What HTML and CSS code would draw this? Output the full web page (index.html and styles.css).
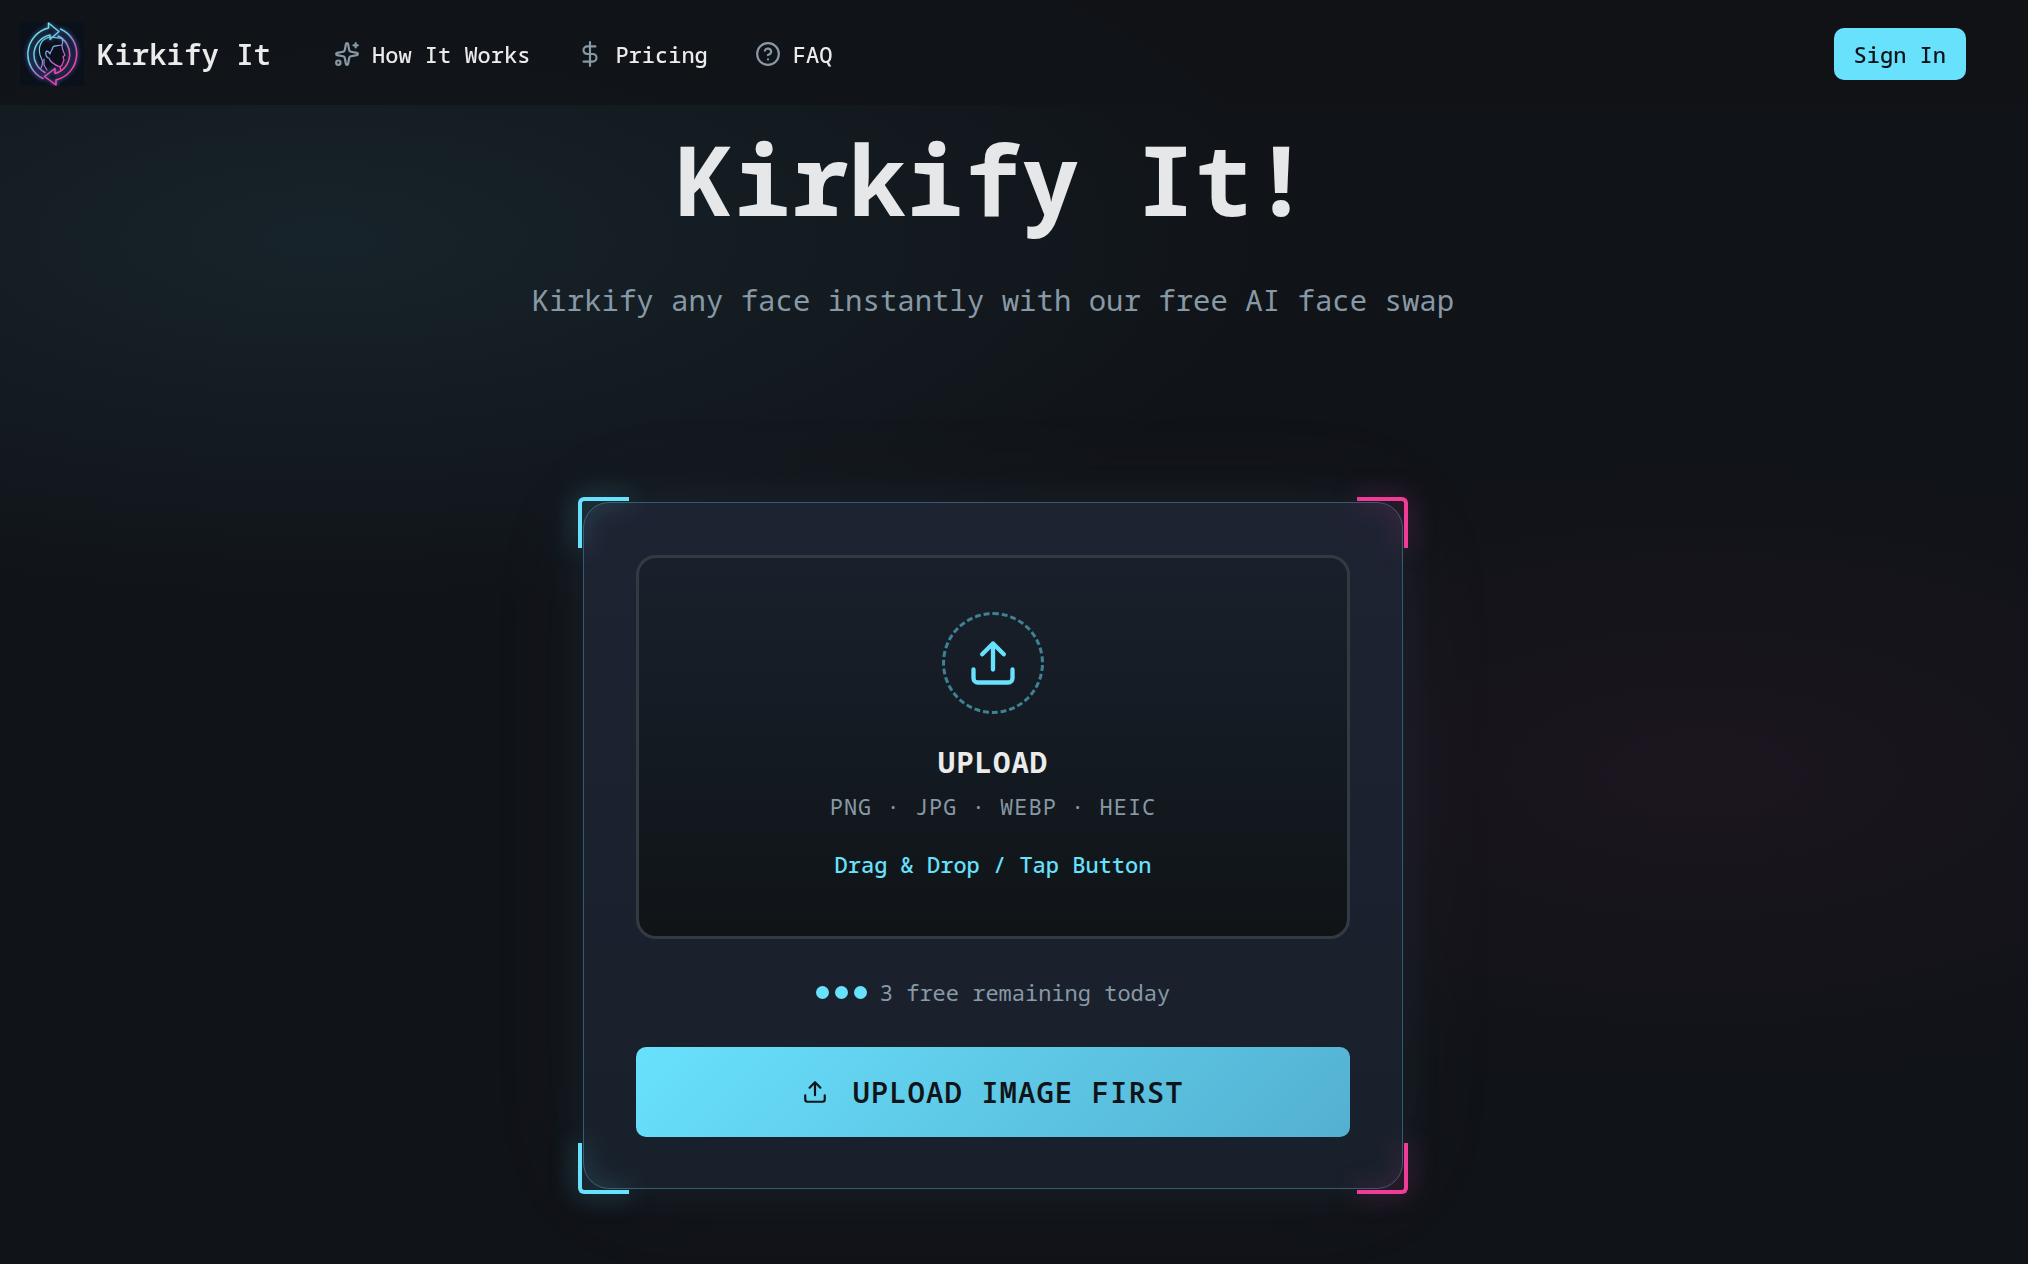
FILE: index.html
```
<!DOCTYPE html>
<html lang="en">
	<head>
		<meta charset="utf-8">
		<title>Kirkify It</title>
		<link rel="stylesheet" href="styles.css">
	</head>
	<body>
		<!-- top bar -->
		<header class="topbar">
			<a class="brand" href="#">
				<svg class="brand-logo" viewBox="0 0 64 64" fill="none" stroke-linejoin="round" stroke-linecap="round">
					<defs>
						<linearGradient id="neon" x1="10" y1="10" x2="50" y2="54" gradientUnits="userSpaceOnUse">
							<stop offset="0" stop-color="#5ff0e4"/>
							<stop offset=".4" stop-color="#6cc4e8"/>
							<stop offset=".6" stop-color="#b070d8"/>
							<stop offset=".8" stop-color="#ff3cb0"/>
						</linearGradient>
					</defs>
					<rect width="64" height="64" fill="#0b111b"/>
					<g class="brand-glow" stroke="url(#neon)">
						<path d="M23 56.500A27 27 0 0 1 28.500 6V1L39 9.500L30 17.500V13A20 20 0 0 0 25 50.500"/>
						<path d="M40.500 7A27 27 0 0 1 36 58V63L24.500 54.500L35 46.500V51.500A20 20 0 0 0 38 14"/>
					</g>
					<g stroke="url(#neon)" stroke-width="1.200">
						<path d="M21 46C24 40 22 38 20 33C18 25 21 18 27 16C31 13 35 17 42 16C43 19 43 21 42 23C38 24 34 23 33 25C32 29 31 28 30 32C29 30 27 28 26 30C25 33 27 36 29 36C30 40 35 43 40 45"/>
						<path d="M42 23C42 27 43 29 45 33L43 35L44 38L42 43L40 45L41 49"/>
						<path d="M24 37V43L27 48"/>
					</g>
				</svg>
				<span>Kirkify It</span>
			</a>
			<nav class="menu">
				<a href="#how">
					<svg class="icon" viewBox="0 0 24 24">
						<path d="M11.017 2.814a1 1 0 0 1 1.966 0l1.051 5.558a2 2 0 0 0 1.594 1.594l5.558 1.051a1 1 0 0 1 0 1.966l-5.558 1.051a2 2 0 0 0-1.594 1.594l-1.051 5.558a1 1 0 0 1-1.966 0l-1.051-5.558a2 2 0 0 0-1.594-1.594l-5.558-1.051a1 1 0 0 1 0-1.966l5.558-1.051a2 2 0 0 0 1.594-1.594z"/>
						<path d="M20 2v4M22 4h-4"/>
						<circle cx="4" cy="20" r="2"/>
					</svg>
					How It Works
				</a>
				<a href="#pricing">
					<svg class="icon" viewBox="0 0 24 24">
						<path d="M12 1v22M17 5H9.500a3.500 3.500 0 0 0 0 7h5a3.500 3.500 0 0 1 0 7H6"/>
					</svg>
					Pricing
				</a>
				<a href="#faq">
					<svg class="icon" viewBox="0 0 24 24">
						<circle cx="12" cy="12" r="10"/>
						<path d="M9.090 9a3 3 0 0 1 5.830 1c0 2-3 3-3 3M12 17h.01"/>
					</svg>
					FAQ
				</a>
			</nav>
			<button class="signin" type="button">Sign In</button>
		</header>

		<!-- hero -->
		<main class="hero">
			<h1>Kirkify It!</h1>
			<p class="subtitle">Kirkify any face instantly with our free AI face swap</p>

			<section class="card">
				<!-- neon corners -->
				<i class="corner top-left"></i>
				<i class="corner top-right"></i>
				<i class="corner bottom-left"></i>
				<i class="corner bottom-right"></i>

				<label class="dropzone" for="photo">
					<input class="file" id="photo" type="file" accept=".png,.jpg,.webp,.heic">
					<span class="ring">
						<svg class="icon" viewBox="0 0 24 24">
							<path d="M12 3v12M17 8l-5-5-5 5M21 15v4a2 2 0 0 1-2 2H5a2 2 0 0 1-2-2v-4"/>
						</svg>
					</span>
					<strong class="drop-title">UPLOAD</strong>
					<span class="formats">PNG · JPG · WEBP · HEIC</span>
					<span class="hint">Drag &amp; Drop / Tap Button</span>
				</label>

				<div class="quota">
					<span class="dots"><i></i><i></i><i></i></span>
					<span>3 free remaining today</span>
				</div>

				<button class="submit" type="button">
					<svg class="icon" viewBox="0 0 24 24">
						<path d="M12 3v12M17 8l-5-5-5 5M21 15v4a2 2 0 0 1-2 2H5a2 2 0 0 1-2-2v-4"/>
					</svg>
					UPLOAD IMAGE FIRST
				</button>
			</section>
		</main>
	</body>
</html>
```
FILE: styles.css
```
*{
	margin: 0;padding: 0;
	box-sizing: border-box;
}
body{
	min-height: 100vh;
	background-color: #101318;
	color: #ebebeb;
	font-family: "Noto Sans Mono", "DejaVu Sans Mono", monospace;
	font-size: 22px;
	line-height: 32px;
}
button{
	border: none;
	font-family: inherit;
	color: #101418;
	cursor: pointer;
}
a{
	color: inherit;
	text-decoration: none;
}
.icon{
	width: 26px;height: 26px;
	flex-shrink: 0;
	fill: none;
	stroke: currentColor;
	stroke-width: 2;
	stroke-linecap: round;
	stroke-linejoin: round;
}

/* top bar */
.topbar{
	position: fixed;
	top: 0;left: 0;right: 0;
	z-index: 10;
	display: flex;
	align-items: center;
	height: 105px;
	padding: 2px 62px 0 20px;
	background-color: rgba(16,19,23,0.8);
}
.brand{
	display: flex;
	align-items: center;
	gap: 13px;
	margin-right: 63px;
	font-size: 29px;
	font-weight: 600;
}
.brand-logo{
	width: 64px;height: 64px;
}
.brand-glow{
	stroke-width: 1.5;
	filter: drop-shadow(0 0 2px #5a7fd0);
}
.menu{
	display: flex;
	gap: 47px;
}
.menu a{
	display: flex;
	align-items: center;
	gap: 12px;
	font-weight: 500;
}
.menu .icon{
	color: #8899a6;
}
.signin{
	margin-left: auto;
	padding: 10px 20px;
	border-radius: 10px;
	background-color: #68e1fd;
	font-size: 22px;
	font-weight: 500;
	line-height: 32px;
}

/* hero, the two soft lights sit in its background */
.hero{
	display: flex;
	flex-direction: column;
	align-items: center;
	padding: 131px 42px 3px 0;
	background-image:
		radial-gradient(ellipse 1000px 380px at 16% 20%, rgba(104,225,253,0.08), transparent),
		radial-gradient(ellipse 700px 320px at 84% 65%, rgba(238,60,150,0.05), transparent);
}
h1{
	font-size: 96px;
	font-weight: 700;
	line-height: 96px;
	color: #e6e7e9;
}
.subtitle{
	margin: 51px 0 180px;
	color: #8899a6;
	font-size: 29px;
	line-height: 44px;
}

/* upload card */
.card{
	position: relative;
	width: 100%;
	max-width: 820px;
	padding: 52px 52px 51px;
	border: 1px solid #325c6d;
	border-radius: 26px;
	background-image: linear-gradient(180deg, #1e2332, #18202b);
	box-shadow:
		0 0 50px rgba(104,225,253,0.06),
		0 0 120px rgba(190,150,190,0.05);
}
.corner{
	position: absolute;
	width: 51px;height: 51px;
	border: 0 solid #68e1fd;
	filter: drop-shadow(0 0 13px rgba(104,225,253,0.6));
}
.top-left{
	top: -6px;left: -6px;
	border-width: 4px 0 0 4px;
	border-top-left-radius: 6px;
}
.top-right{
	top: -6px;right: -6px;
	border-width: 4px 4px 0 0;
	border-top-right-radius: 6px;
}
.bottom-left{
	bottom: -6px;left: -6px;
	border-width: 0 0 4px 4px;
	border-bottom-left-radius: 6px;
}
.bottom-right{
	bottom: -6px;right: -6px;
	border-width: 0 4px 4px 0;
	border-bottom-right-radius: 6px;
}
.top-right,
.bottom-right{
	border-color: #ee3c98;
	filter: drop-shadow(0 0 13px rgba(238,60,152,0.6));
}

/* drop area */
.dropzone{
	position: relative;
	display: flex;
	flex-direction: column;
	align-items: center;
	padding: 54px 20px 56px;
	border: 3px solid #333b42;
	border-radius: 20px;
	background-image: linear-gradient(180deg, #19202b, #131920 60%, #101417);
	cursor: pointer;
}
.file{
	position: absolute;
	width: 1px;height: 1px;
	opacity: 0;
}
.ring{
	display: flex;
	align-items: center;
	justify-content: center;
	width: 102px;height: 102px;
	border: 3px dashed #3f8294;
	border-radius: 50%;
	color: #68e1fd;
}
.ring .icon{
	width: 52px;height: 52px;
}
.drop-title{
	margin-top: 26px;
	font-size: 29px;
	line-height: 44px;
	letter-spacing: 1px;
}
.formats{
	margin-top: 6px;
	color: #8899a6;
	letter-spacing: 1px;
}
.hint{
	margin-top: 26px;
	color: #68e1fd;
	font-weight: 500;
}

/* free uploads left */
.quota{
	display: flex;
	align-items: center;
	justify-content: center;
	gap: 13px;
	margin: 37px 0 39px;
	color: #8899a6;
}
.dots{
	display: flex;
	gap: 6px;
}
.dots i{
	width: 13px;height: 13px;
	border-radius: 50%;
	background-color: #68e1fd;
}
.submit{
	display: flex;
	align-items: center;
	justify-content: center;
	gap: 24px;
	width: 100%;
	padding: 23px;
	border-radius: 10px;
	background-image: linear-gradient(135deg, #68e1fd, #54b0d0);
	font-size: 29px;
	font-weight: 600;
	line-height: 44px;
	letter-spacing: 1px;
}
```
